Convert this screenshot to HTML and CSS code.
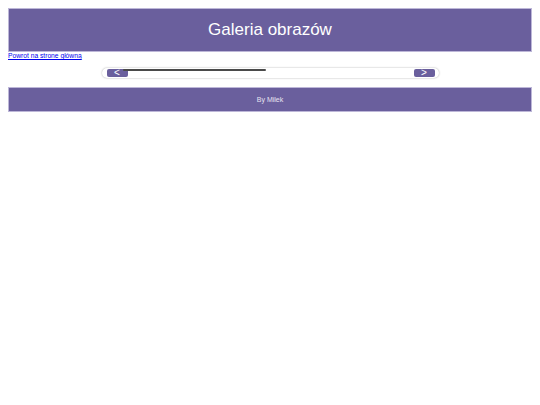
FILE: index.html
```html
<!DOCTYPE html>
<html lang="pl">
<head>
<meta charset="utf-8">
<title>Galeria obrazów</title>
<link rel="stylesheet" href="styles.css">
</head>
<body>
<header class="top">
  <h1 class="title">Galeria obrazów</h1>
</header>
<a class="back" href="#">Powrot na strone główną</a>
<div class="slider-wrap">
  <div class="slider">
    <button class="nav prev">&lt;</button>
    <div class="track"><div class="thumb"></div></div>
    <button class="nav next">&gt;</button>
  </div>
</div>
<footer class="bottom">By Milek</footer>
</body>
</html>
```
FILE: styles.css
```css
html, body { background: #fff; }
body {
  margin: 8px;
  font-family: "Liberation Sans", Arial, sans-serif;
}
.top {
  background: #6a5f9d;
  border: 1px solid #bdb7d8;
  height: 42px;
  display: flex;
  align-items: center;
  justify-content: center;
}
.title {
  margin: 0;
  color: #fff;
  font-weight: normal;
  font-size: 17px;
  line-height: 20px;
}
.back {
  display: block;
  font-size: 6.7px;
  line-height: 8px;
  color: #0000ee;
  width: max-content;
}
.slider-wrap {
  display: flex;
  justify-content: center;
  padding: 8px 0 9px;
}
.slider {
  width: 337px;
  height: 10px;
  border-radius: 5px;
  background: #fff;
  box-shadow: 0 0 2px rgba(0,0,0,0.35);
  display: flex;
  align-items: center;
  padding: 0 4px 0 5px;
  box-sizing: border-box;
  position: relative;
}
.nav {
  width: 21px;
  height: 8px;
  border: 0;
  border-radius: 2px;
  background: #6a5f9d;
  color: #fff;
  font-family: "Liberation Sans", Arial, sans-serif;
  font-size: 10px;
  line-height: 8px;
  padding: 0;
  margin: 0;
}
.track {
  flex: 1;
  height: 8px;
  position: relative;
}
.thumb {
  position: absolute;
  left: -5px;
  top: 0;
  width: 143px;
  height: 2px;
  background: #4a4a4a;
  border-radius: 1px;
}
.bottom {
  background: #6a5f9d;
  border: 1px solid #bdb7d8;
  height: 22px;
  display: flex;
  align-items: center;
  justify-content: center;
  color: #e6e3f0;
  font-size: 7px;
  padding-bottom: 1px;
  box-sizing: content-box;
}
```
